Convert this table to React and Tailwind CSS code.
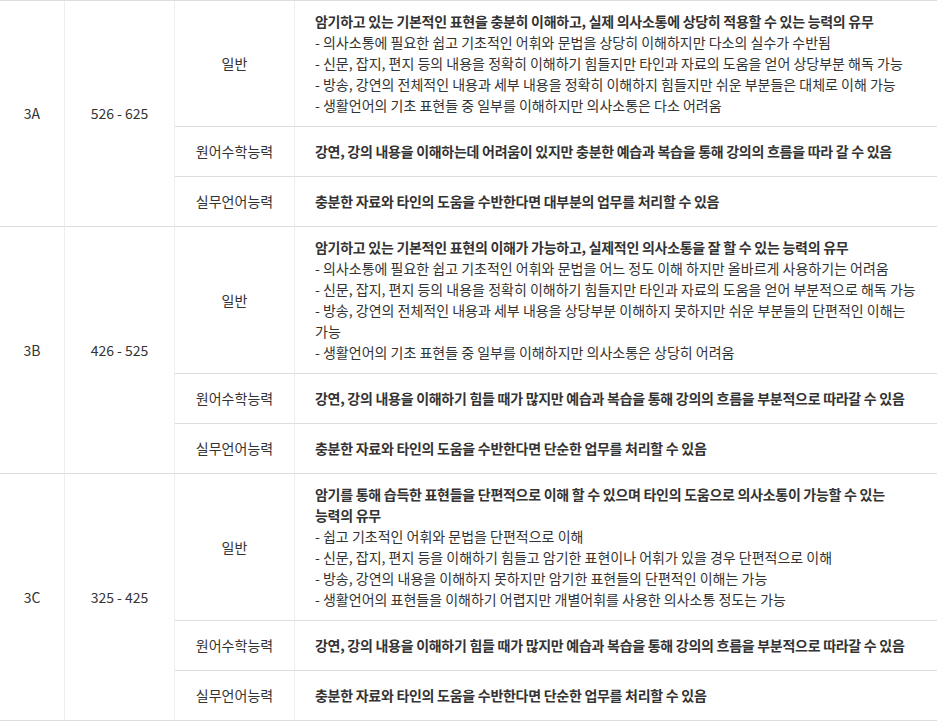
const LEVELS = [
  {
    grade: '3A',
    score: '526 - 625',
    general: {
      title: ['암기하고 있는 기본적인 표현을 충분히 이해하고, 실제 의사소통에 상당히 적용할 수 있는 능력의 유무'],
      items: [
        '- 의사소통에 필요한 쉽고 기초적인 어휘와 문법을 상당히 이해하지만 다소의 실수가 수반됨',
        '- 신문, 잡지, 편지 등의 내용을 정확히 이해하기 힘들지만 타인과 자료의 도움을 얻어 상당부분 해독 가능',
        '- 방송, 강연의 전체적인 내용과 세부 내용을 정확히 이해하지 힘들지만 쉬운 부분들은 대체로 이해 가능',
        '- 생활언어의 기초 표현들 중 일부를 이해하지만 의사소통은 다소 어려움',
      ],
    },
    native: '강연, 강의 내용을 이해하는데 어려움이 있지만 충분한 예습과 복습을 통해 강의의 흐름을 따라 갈 수 있음',
    work: '충분한 자료와 타인의 도움을 수반한다면 대부분의 업무를 처리할 수 있음',
  },
  {
    grade: '3B',
    score: '426 - 525',
    general: {
      title: ['암기하고 있는 기본적인 표현의 이해가 가능하고, 실제적인 의사소통을 잘 할 수 있는 능력의 유무'],
      items: [
        '- 의사소통에 필요한 쉽고 기초적인 어휘와 문법을 어느 정도 이해 하지만 올바르게 사용하기는 어려움',
        '- 신문, 잡지, 편지 등의 내용을 정확히 이해하기 힘들지만 타인과 자료의 도움을 얻어 부분적으로 해독 가능',
        '- 방송, 강연의 전체적인 내용과 세부 내용을 상당부분 이해하지 못하지만 쉬운 부분들의 단편적인 이해는',
        '가능',
        '- 생활언어의 기초 표현들 중 일부를 이해하지만 의사소통은 상당히 어려움',
      ],
    },
    native: '강연, 강의 내용을 이해하기 힘들 때가 많지만 예습과 복습을 통해 강의의 흐름을 부분적으로 따라갈 수 있음',
    work: '충분한 자료와 타인의 도움을 수반한다면 단순한 업무를 처리할 수 있음',
  },
  {
    grade: '3C',
    score: '325 - 425',
    general: {
      title: [
        '암기를 통해 습득한 표현들을 단편적으로 이해 할 수 있으며 타인의 도움으로 의사소통이 가능할 수 있는',
        '능력의 유무',
      ],
      items: [
        '- 쉽고 기초적인 어휘와 문법을 단편적으로 이해',
        '- 신문, 잡지, 편지 등을 이해하기 힘들고 암기한 표현이나 어휘가 있을 경우 단편적으로 이해',
        '- 방송, 강연의 내용을 이해하지 못하지만 암기한 표현들의 단편적인 이해는 가능',
        '- 생활언어의 표현들을 이해하기 어렵지만 개별어휘를 사용한 의사소통 정도는 가능',
      ],
    },
    native: '강연, 강의 내용을 이해하기 힘들 때가 많지만 예습과 복습을 통해 강의의 흐름을 부분적으로 따라갈 수 있음',
    work: '충분한 자료와 타인의 도움을 수반한다면 단순한 업무를 처리할 수 있음',
  },
];

const cell = 'border-b border-r border-b-[#dddddd] border-r-[#eeeeee] align-middle text-center';
const strong = 'font-bold tracking-[-0.02em] whitespace-nowrap';

export default function App() {
  return (
    <div
      className="w-[937px] bg-white text-[14px] leading-[21px] text-[#333333]"
      style={{ fontFamily: '"Noto Sans CJK KR", "Noto Sans", sans-serif' }}
    >
      <table className="w-full table-fixed border-separate border-spacing-0 border-t border-[#dddddd]">
        <colgroup>
          <col className="w-[65px]" />
          <col className="w-[110px]" />
          <col className="w-[120px]" />
          <col />
        </colgroup>
        <tbody>
          {LEVELS.map(level => (
            <LevelRows key={level.grade} level={level} />
          ))}
        </tbody>
      </table>
    </div>
  );
}

function LevelRows({ level }) {
  return (
    <>
      <tr>
        <td rowSpan={3} className={cell}>{level.grade}</td>
        <td rowSpan={3} className={cell}>{level.score}</td>
        <td className={cell}>일반</td>
        <td className="border-b border-[#dddddd] px-[20px] py-[10px]">
          {level.general.title.map(t => (
            <div key={t} className={strong}>{t}</div>
          ))}
          {level.general.items.map(t => (
            <div key={t} className="whitespace-nowrap">{t}</div>
          ))}
        </td>
      </tr>
      <tr>
        <td className={cell}>원어수학능력</td>
        <td className={`border-b border-[#dddddd] px-[20px] py-[14px] ${strong}`}>{level.native}</td>
      </tr>
      <tr>
        <td className={cell}>실무언어능력</td>
        <td className={`border-b border-[#dddddd] px-[20px] py-[14px] ${strong}`}>{level.work}</td>
      </tr>
    </>
  );
}
